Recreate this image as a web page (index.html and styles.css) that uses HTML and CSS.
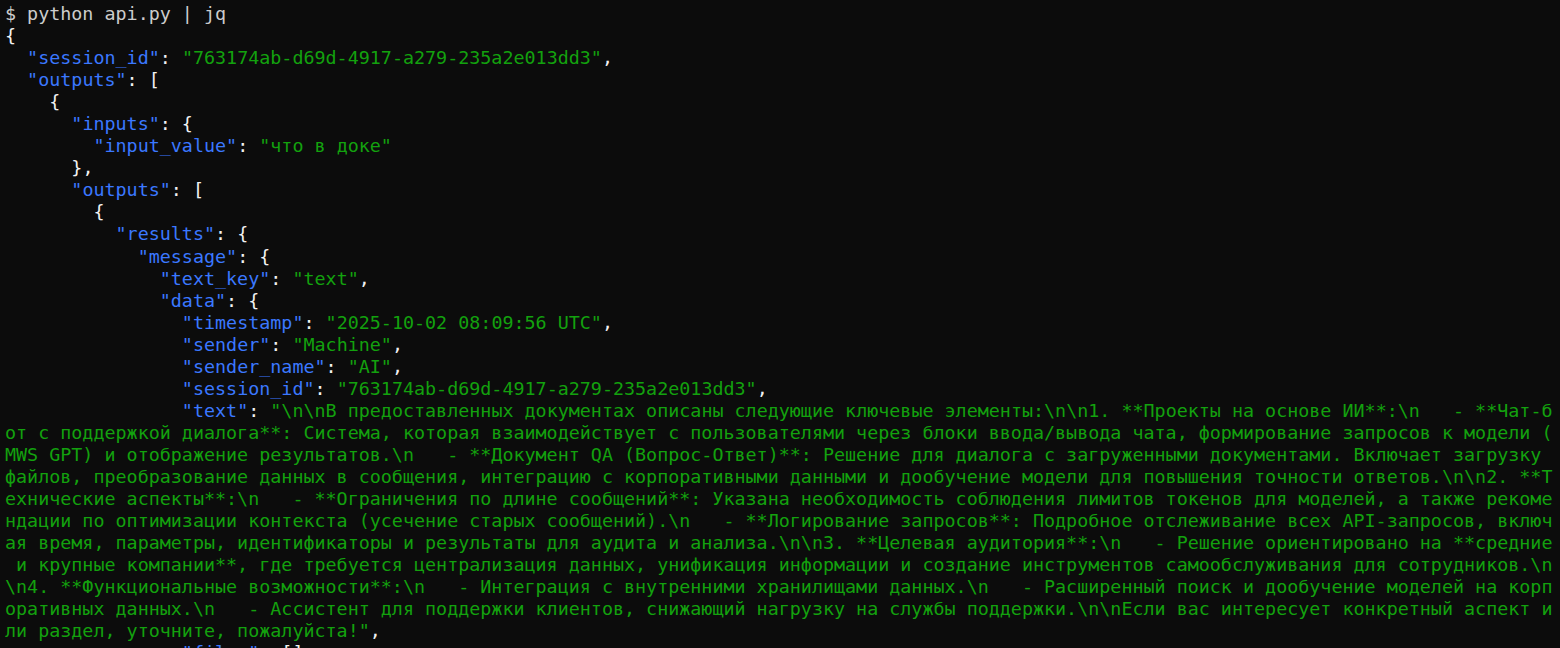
FILE: index.html
```html
<!DOCTYPE html>
<html lang="ru">
<head>
<meta charset="utf-8">
<title>Terminal</title>
<link rel="stylesheet" href="styles.css">
</head>
<body>
<main class="terminal">
<pre class="output"><span class="cmd">$ python api.py | jq</span>
<span class="p">{</span>
  <span class="k">"session_id"</span><span class="p">:</span> <span class="s">"763174ab-d69d-4917-a279-235a2e013dd3"</span><span class="p">,</span>
  <span class="k">"outputs"</span><span class="p">: [</span>
    <span class="p">{</span>
      <span class="k">"inputs"</span><span class="p">: {</span>
        <span class="k">"input_value"</span><span class="p">:</span> <span class="s">"что в доке"</span>
      <span class="p">},</span>
      <span class="k">"outputs"</span><span class="p">: [</span>
        <span class="p">{</span>
          <span class="k">"results"</span><span class="p">: {</span>
            <span class="k">"message"</span><span class="p">: {</span>
              <span class="k">"text_key"</span><span class="p">:</span> <span class="s">"text"</span><span class="p">,</span>
              <span class="k">"data"</span><span class="p">: {</span>
                <span class="k">"timestamp"</span><span class="p">:</span> <span class="s">"2025-10-02 08:09:56 UTC"</span><span class="p">,</span>
                <span class="k">"sender"</span><span class="p">:</span> <span class="s">"Machine"</span><span class="p">,</span>
                <span class="k">"sender_name"</span><span class="p">:</span> <span class="s">"AI"</span><span class="p">,</span>
                <span class="k">"session_id"</span><span class="p">:</span> <span class="s">"763174ab-d69d-4917-a279-235a2e013dd3"</span><span class="p">,</span>
                <span class="k">"text"</span><span class="p">:</span> <span class="s">"\n\nВ предоставленных документах описаны следующие ключевые элементы:\n\n1. **Проекты на основе ИИ**:\n   - **Чат-б
от с поддержкой диалога**: Система, которая взаимодействует с пользователями через блоки ввода/вывода чата, формирование запросов к модели (
MWS GPT) и отображение результатов.\n   - **Документ QA (Вопрос-Ответ)**: Решение для диалога с загруженными документами. Включает загрузку 
файлов, преобразование данных в сообщения, интеграцию с корпоративными данными и дообучение модели для повышения точности ответов.\n\n2. **Т
ехнические аспекты**:\n   - **Ограничения по длине сообщений**: Указана необходимость соблюдения лимитов токенов для моделей, а также рекоме
ндации по оптимизации контекста (усечение старых сообщений).\n   - **Логирование запросов**: Подробное отслеживание всех API-запросов, включ
ая время, параметры, идентификаторы и результаты для аудита и анализа.\n\n3. **Целевая аудитория**:\n   - Решение ориентировано на **средние
 и крупные компании**, где требуется централизация данных, унификация информации и создание инструментов самообслуживания для сотрудников.\n
\n4. **Функциональные возможности**:\n   - Интеграция с внутренними хранилищами данных.\n   - Расширенный поиск и дообучение моделей на корп
оративных данных.\n   - Ассистент для поддержки клиентов, снижающий нагрузку на службы поддержки.\n\nЕсли вас интересует конкретный аспект и
ли раздел, уточните, пожалуйста!"</span><span class="p">,</span>
                <span class="k">"files"</span><span class="p">: [],</span></pre>
</main>
</body>
</html>
```

FILE: styles.css
```css
html, body {
  margin: 0;
  padding: 0;
  background: #0c0c0c;
  height: 100%;
  overflow: hidden;
}

.terminal {
  padding: 3px 0 0 5px;
  height: 100%;
  box-sizing: border-box;
  overflow: hidden;
}

.output {
  margin: 0;
  font-family: "DejaVu Sans Mono", "Liberation Mono", monospace;
  font-size: 18.37px;
  line-height: 22.04px;
  color: #cccccc;
  white-space: pre;
}

.cmd { color: #cccccc; }
.p { color: #f2f2f2; }
.k { color: #3b78ff; }
.s { color: #13a10e; }
```
